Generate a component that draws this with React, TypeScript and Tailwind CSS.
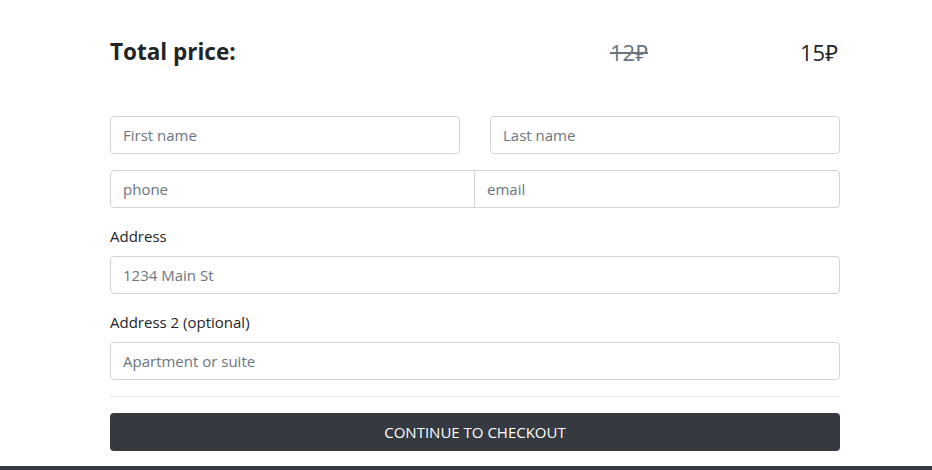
export default function App() {
  return (
    <div className="min-h-screen bg-white flex flex-col text-[#212529]" style={{ fontFamily: '"Open Sans", "Noto Sans", sans-serif' }}>
      <main className="flex-1 w-[730px] ml-[110px] pt-[37px]">
        {/* Price */}
        <div className="flex items-center h-[30px] mb-[49px]">
          <h2 className="w-[500px] text-[22.5px] font-bold leading-[30px]">Total price:</h2>
          <span className="text-[22px] leading-[30px] text-[#6c757d] line-through">12₽</span>
          <span className="ml-auto text-[22px] leading-[30px] mr-[2px]">15₽</span>
        </div>

        {/* Name */}
        <div className="grid grid-cols-2 gap-[30px] mb-4">
          <Field placeholder="First name" />
          <Field placeholder="Last name" />
        </div>

        {/* Contacts */}
        <div className="flex mb-4">
          <input
            placeholder="phone"
            className="w-[365px] h-[38px] border border-[#ced4da] rounded-l-[4px] px-3 text-[15px] outline-none placeholder:text-[#6c757d]"
          />
          <input
            placeholder="email"
            className="flex-1 -ml-px h-[38px] border border-[#ced4da] rounded-r-[4px] px-3 text-[15px] outline-none placeholder:text-[#6c757d]"
          />
        </div>

        <label className="block text-[15px] leading-6 mb-2">Address</label>
        <Field placeholder="1234 Main St" className="mb-4" />

        <label className="block text-[15px] leading-6 mb-2">Address 2 (optional)</label>
        <Field placeholder="Apartment or suite" />

        <hr className="my-4 border-t border-[#e5e5e5]" />

        <button className="w-full h-[38px] bg-[#343a40] text-white text-[15px] rounded-[4px]">
          CONTINUE TO CHECKOUT
        </button>
      </main>
      <footer className="h-[4px] mt-[15px] bg-[#343a40]" />
    </div>
  )
}

function Field({ placeholder, className = '' }: { placeholder: string; className?: string }) {
  return (
    <input
      placeholder={placeholder}
      className={`block w-full h-[38px] border border-[#ced4da] rounded-[4px] px-3 text-[15px] outline-none placeholder:text-[#6c757d] ${className}`}
    />
  )
}
